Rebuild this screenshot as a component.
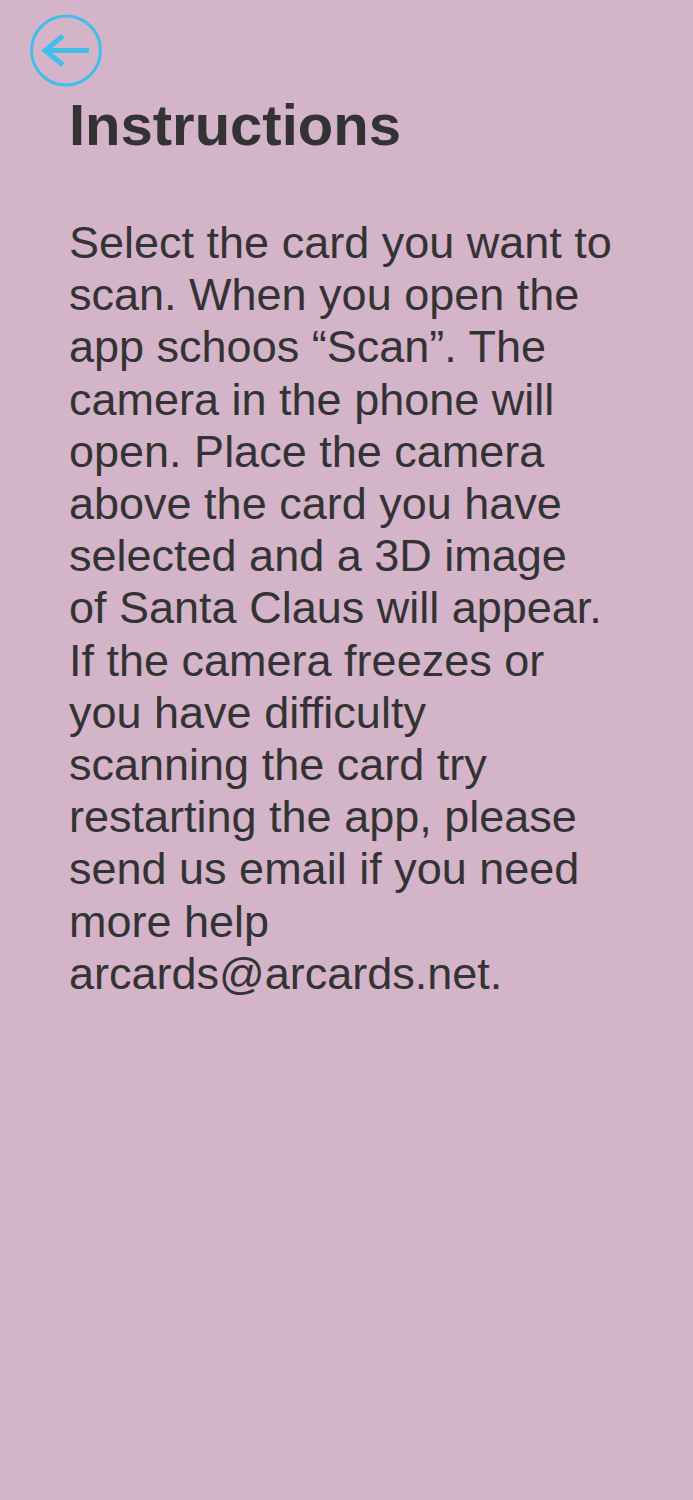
import { ReactNode } from 'react'

function BackIcon() {
  return (
    <svg width="74" height="74" viewBox="0 0 74 74" fill="none" aria-hidden="true">
      <circle cx="37" cy="36.5" r="34.5" stroke="#41bfea" strokeWidth="3" />
      <path
        d="M60 36.5H16M34 22L16 36.5L34 51"
        stroke="#41bfea"
        strokeWidth="5"
        strokeLinejoin="miter"
      />
    </svg>
  )
}

function Paragraph({ children }: { children: ReactNode }) {
  return (
    <p className="mt-[63px] w-[547px] text-[45px] leading-[52.2px] text-[#333333]">{children}</p>
  )
}

export default function App() {
  return (
    <div
      className="min-h-[1500px] w-full bg-[#d4b4c9]"
      style={{ fontFamily: '"Liberation Sans", Arial, sans-serif' }}
    >
      <div className="pl-[29px] pt-[14px]">
        <button type="button" className="block h-[74px] w-[74px]">
          <BackIcon />
        </button>
      </div>
      <div className="px-[69px]">
        <h1 className="mt-[8px] text-[58px] font-bold leading-[58px] text-[#333333]">Instructions</h1>
        <Paragraph>
          Select the card you want to scan. When you open the app schoos “Scan”. The camera in the
          phone will open. Place the camera above the card you have selected and a 3D image of Santa
          Claus will appear. If the camera freezes or you have difficulty scanning the card try
          restarting the app, please send us email if you need more help arcards@arcards.net.
        </Paragraph>
      </div>
    </div>
  )
}
